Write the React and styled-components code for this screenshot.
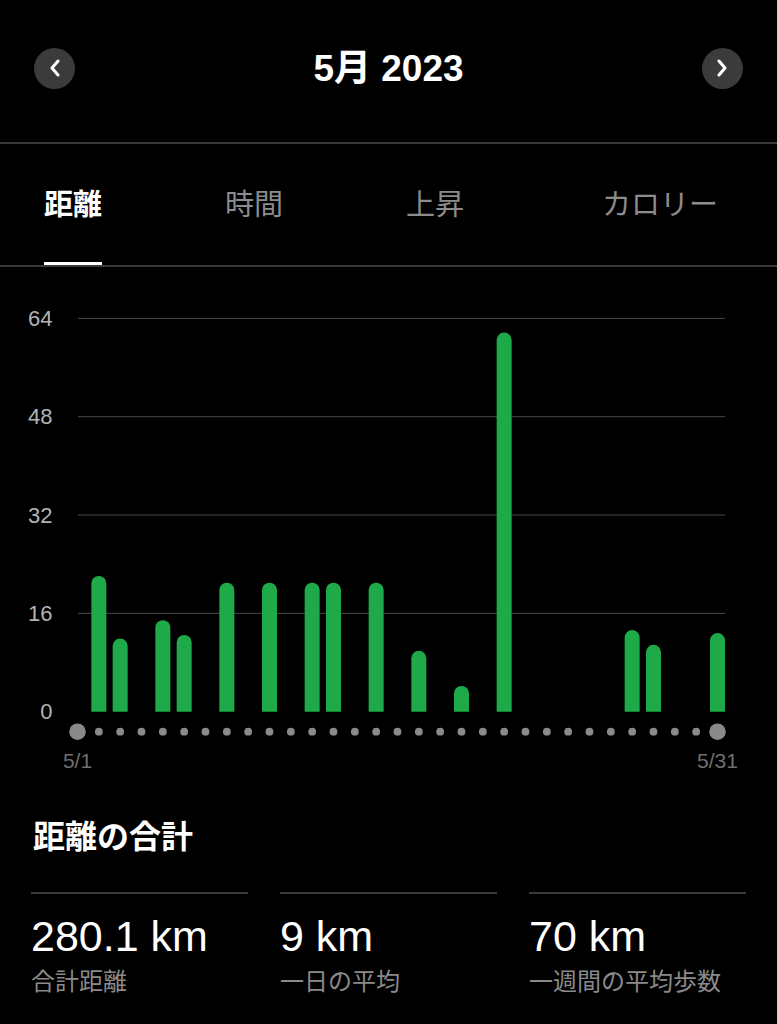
import React from "react";
import styled, { createGlobalStyle } from "styled-components";

const FONT = `"Liberation Sans", "Noto Sans CJK JP", sans-serif`;

const Global = createGlobalStyle`
  html, body { margin: 0; padding: 0; background: #000; }
  body { font-family: ${FONT}; color: #fff; }
`;

const Page = styled.div`
  width: 777px;
  min-height: 1024px;
  background: #000;
  display: flex;
  flex-direction: column;
`;

const Header = styled.header`
  height: 144px;
  box-sizing: border-box;
  padding: 0 34px 6px;
  display: flex;
  align-items: center;
  justify-content: space-between;
  border-bottom: 2px solid #3a3a3a;
`;

const NavButton = styled.button`
  width: 41px;
  height: 41px;
  border-radius: 50%;
  border: none;
  padding: 0;
  background: #3b3b3b;
  display: flex;
  align-items: center;
  justify-content: center;
`;

const Title = styled.h1`
  margin: 0;
  font-family: ${FONT};
  font-size: 37px;
  font-weight: 700;
  line-height: 1;
  color: #fff;
`;

const TabBar = styled.nav`
  height: 123px;
  box-sizing: border-box;
  display: flex;
  align-items: stretch;
  padding-left: 44px;
  gap: 123px;
  border-bottom: 2px solid #3a3a3a;
`;

const Tab = styled.div`
  display: flex;
  align-items: center;
  box-sizing: border-box;
  padding-top: 4px;
  margin-left: ${(p) => p.$extra || 0}px;
  font-size: 29px;
  line-height: 1;
  font-weight: ${(p) => (p.$active ? 700 : 400)};
  color: ${(p) => (p.$active ? "#fff" : "#8c8c8c")};
  border-bottom: 3px solid ${(p) => (p.$active ? "#fff" : "transparent")};
`;

const ChartSection = styled.section`
  height: 513px;
`;

const ChartSvg = styled.svg`
  display: block;
  width: 777px;
  height: 513px;
`;

const Summary = styled.section`
  padding-top: 38px;
`;

const SummaryTitle = styled.h2`
  margin: 0 0 36px 33px;
  font-size: 32px;
  font-weight: 700;
  line-height: 1.2;
  color: #fff;
`;

const StatGrid = styled.div`
  display: grid;
  grid-template-columns: repeat(3, 217px);
  column-gap: 32px;
  padding-left: 31px;
`;

const Stat = styled.div`
  border-top: 2px solid #3a3a3a;
  padding-top: 21px;
  display: flex;
  flex-direction: column;
`;

const StatValue = styled.div`
  font-size: 43px;
  line-height: 1;
  color: #fff;
`;

const StatLabel = styled.div`
  margin-top: 12px;
  font-size: 24px;
  line-height: 1;
  color: #8a8a8a;
`;

const Chevron = ({ dir }) => (
  <svg width="12" height="18" viewBox="0 0 12 18">
    <polyline
      points={dir === "left" ? "9,2 3,9 9,16" : "3,2 9,9 3,16"}
      fill="none"
      stroke="#fff"
      strokeWidth="3"
      strokeLinecap="round"
      strokeLinejoin="round"
    />
  </svg>
);

const OFFSET = 267;
const BASE = 711.7 - OFFSET;
const PER = 98.33 / 16;
const dayX = (d) => 77.5 + (d - 1) * 21.333;

const data = {
  2: 22.1, 3: 11.9, 5: 14.9, 6: 12.5, 8: 21, 10: 21, 12: 21, 13: 21,
  15: 21, 17: 9.9, 19: 4.2, 21: 61.7, 27: 13.3, 28: 10.9, 31: 12.8,
};

const ticks = [64, 48, 32, 16, 0];

function barPath(cx, v) {
  const w = 15;
  const r = w / 2;
  const x = cx - r;
  const top = BASE - v * PER;
  return `M${x},${BASE} V${top + r} A${r},${r} 0 0 1 ${x + w},${top + r} V${BASE} Z`;
}

function Chart() {
  const days = Array.from({ length: 31 }, (_, i) => i + 1);
  return (
    <ChartSvg viewBox="0 0 777 513">
      {ticks.map((t) => {
        const y = BASE - t * PER;
        return (
          <g key={t}>
            {t > 0 && (
              <line x1="78" x2="725" y1={y} y2={y} stroke="#4a4a4a" strokeWidth="1" />
            )}
            <text
              x="52.5"
              y={y}
              textAnchor="end"
              dominantBaseline="central"
              fill="#b3b3b3"
              fontSize="22"
              fontFamily={FONT}
            >
              {t}
            </text>
          </g>
        );
      })}
      {Object.entries(data).map(([d, v]) => (
        <path key={d} d={barPath(dayX(Number(d)), v)} fill="#1faa4a" />
      ))}
      {days.map((d) => (
        <circle
          key={d}
          cx={dayX(d)}
          cy={731.7 - OFFSET}
          r={d === 1 || d === 31 ? 8.3 : 3.9}
          fill="#8a8a8a"
        />
      ))}
      <text x={dayX(1)} y={760 - OFFSET} textAnchor="middle" dominantBaseline="central" fill="#6e6e6e" fontSize="21" fontFamily={FONT}>5/1</text>
      <text x={dayX(31)} y={760 - OFFSET} textAnchor="middle" dominantBaseline="central" fill="#6e6e6e" fontSize="21" fontFamily={FONT}>5/31</text>
    </ChartSvg>
  );
}

const tabs = [
  { label: "距離", active: true },
  { label: "時間" },
  { label: "上昇" },
  { label: "カロリー", extra: 15 },
];

const stats = [
  { value: "280.1 km", label: "合計距離" },
  { value: "9 km", label: "一日の平均" },
  { value: "70 km", label: "一週間の平均歩数" },
];

export default function App() {
  return (
    <Page>
      <Global />
      <Header>
        <NavButton aria-label="前の月"><Chevron dir="left" /></NavButton>
        <Title>5月 2023</Title>
        <NavButton aria-label="次の月"><Chevron dir="right" /></NavButton>
      </Header>
      <TabBar>
        {tabs.map((t) => (
          <Tab key={t.label} $active={t.active} $extra={t.extra}>{t.label}</Tab>
        ))}
      </TabBar>
      <ChartSection>
        <Chart />
      </ChartSection>
      <Summary>
        <SummaryTitle>距離の合計</SummaryTitle>
        <StatGrid>
          {stats.map((s) => (
            <Stat key={s.label}>
              <StatValue>{s.value}</StatValue>
              <StatLabel>{s.label}</StatLabel>
            </Stat>
          ))}
        </StatGrid>
      </Summary>
    </Page>
  );
}
